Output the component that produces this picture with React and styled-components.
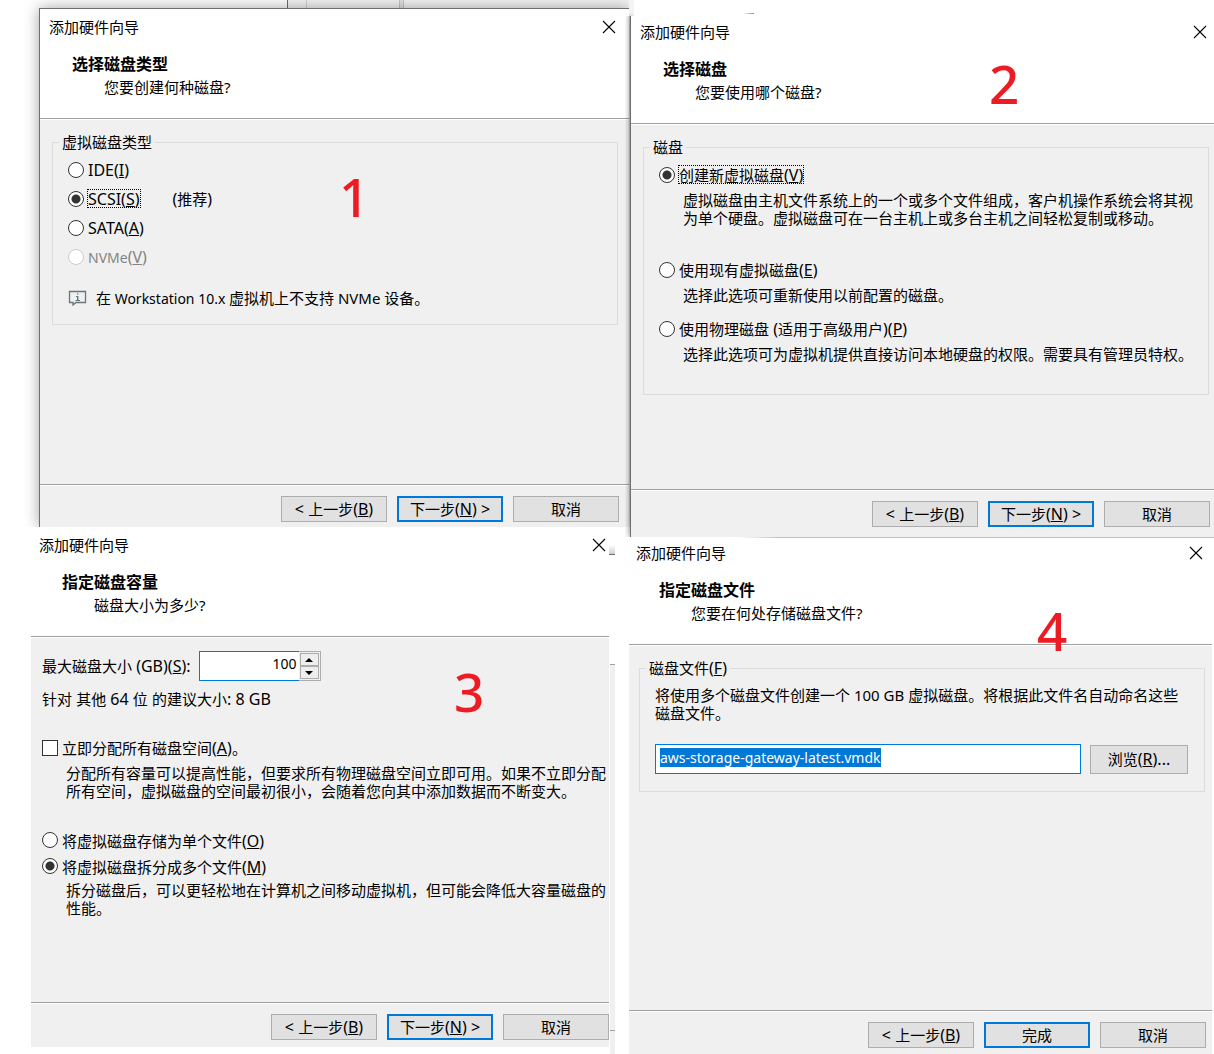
import React from "react";
import styled, { createGlobalStyle, css } from "styled-components";

const GlobalStyle = createGlobalStyle`
  *, *::before, *::after { box-sizing: border-box; }
  body {
    margin: 0;
    background: #fff;
    color: #000;
    font: 15px/18px "Noto Sans CJK SC", "Noto Sans", sans-serif;
  }
  h1, h2, p, fieldset { margin: 0; }
  button, input { font: inherit; color: inherit; }
`;

const latin = css`
  font-family: "Noto Sans", "Noto Sans CJK SC", sans-serif;
  font-size: 14px;
`;

const Latin = styled.span`
  ${latin}
  font-size: ${(p) => p.$size || 14}px;
  line-height: 1;
`;

const Board = styled.main`
  display: grid;
  grid-template-columns: 629fr 585fr;
  min-height: 100vh;
  overflow: hidden;
`;

const Column = styled.div`
  position: relative;
  display: flex;
  flex-direction: column;
  min-width: 0;
`;

const Backdrop = styled.div`
  position: relative;
  display: flex;
  height: ${(p) => p.$height}px;
  flex: none;
`;

const BackdropPane = styled.div`
  width: ${(p) => p.$width}px;
  flex: ${(p) => (p.$grow ? "1 0 auto" : "none")};
  background: ${(p) => p.$tone || "#fff"};
  border-right: ${(p) => (p.$edge ? `1px solid ${p.$edge}` : "0")};
`;

const BackdropMark = styled.div`
  position: absolute;
  left: 114px;
  bottom: 0;
  width: 11px;
  height: 1px;
  background: linear-gradient(to right, #fff, #888);
`;

const Slot = styled.div`
  display: flex;
  flex: none;
  padding: 0 ${(p) => p.$right || 0}px 0 ${(p) => p.$left || 0}px;
`;

const Rule = styled.div`
  flex: none;
  height: 1px;
  background: linear-gradient(to right, #fff 110px, #c0c0c0 150px);
`;

const frames = {
  window: css`
    border: 1px solid #6d6e71;
    border-width: 1px 0 0 1px;
    box-shadow: 0 0 14px rgba(0, 0, 0, 0.36);
    clip-path: inset(-8px -5px 0 -16px);
  `,
  overlap: css`
    box-shadow: -1px 0 #6d6e71, -2px 0 5px rgba(0, 0, 0, 0.4);
    clip-path: inset(2px 0 0 -6px);
  `,
};

const Dialog = styled.section`
  position: relative;
  display: flex;
  flex: 1;
  flex-direction: column;
  min-width: 0;
  background: #f0f0f0;
  ${(p) => frames[p.$frame]}
`;

const DialogHead = styled.header`
  flex: none;
  background: #fff;
  border-bottom: 1px solid #a0a0a0;
  padding-bottom: 21px;
`;

const TitleBar = styled.div`
  display: flex;
  align-items: center;
  justify-content: space-between;
  height: ${(p) => (p.$compact ? 33 : 36)}px;
  padding: 0 ${(p) => p.$right}px ${(p) => (p.$compact ? 3 : 0)}px ${(p) => p.$left}px;
`;

const CloseButton = styled.button`
  display: flex;
  padding: 0;
  border: 0;
  background: none;
`;

const Heading = styled.h1`
  margin: 8px 0 0 ${(p) => p.$left + 23}px;
  font-size: 16px;
  line-height: 20px;
  font-weight: 700;
`;

const Question = styled.p`
  margin: 4px 0 0 ${(p) => p.$left + 55}px;
  line-height: 20px;
`;

const DialogBody = styled.div`
  flex: none;
  min-height: 365px;
  padding: ${(p) => p.$top || 12}px ${(p) => p.$right}px 0 ${(p) => p.$left}px;
  border-top: 1px solid #fff;
`;

const DialogFoot = styled.footer`
  display: flex;
  justify-content: flex-end;
  gap: 10px;
  flex: none;
  padding: 11px ${(p) => p.$right}px ${(p) => p.$bottom}px;
  border-top: 1px solid #a0a0a0;
  box-shadow: inset 0 1px #fff;
`;

const Button = styled.button`
  width: ${(p) => p.$width || 106}px;
  height: ${(p) => p.$height || 26}px;
  flex: none;
  padding: 0;
  background: #e1e1e1;
  border: ${(p) => (p.$primary ? "2px solid #0078d7" : "1px solid #adadad")};
  white-space: nowrap;
`;

const Group = styled.fieldset`
  min-width: 0;
  padding: 0 ${(p) => p.$right || 10}px ${(p) => p.$bottom}px 15px;
  border: 1px solid #dcdcdc;
`;

const Legend = styled.legend`
  margin: 0 0 3px -9px;
  padding: 0 3px;
  line-height: 20px;
`;

const Option = styled.div`
  display: flex;
  align-items: center;
  height: ${(p) => p.$height || 29}px;
  color: ${(p) => (p.$disabled ? "#838383" : "inherit")};
`;

const Choice = styled.input`
  appearance: none;
  flex: none;
  width: 16px;
  height: 16px;
  margin: 0 3px 0 0;
  background: #fff;
  border: 1px solid #333;
  &[type="radio"] { border-radius: 50%; }
  &[type="radio"]:checked {
    background: radial-gradient(circle, #333 0 4px, #fff 5px);
  }
  &:disabled { border-color: #ccc; }
`;

const OptionLabel = styled.label`
  border: 1px dotted ${(p) => (p.$focused ? "#000" : "transparent")};
  line-height: 17px;
  white-space: nowrap;
`;

const Hint = styled.span`
  margin-left: 32px;
`;

const Notice = styled.p`
  display: flex;
  align-items: center;
  gap: 9px;
  height: 20px;
  margin-top: 17px;
`;

const Description = styled.p`
  margin: 0 0 ${(p) => p.$gap || 0}px ${(p) => p.$indent || 0}px;
  padding-top: ${(p) => p.$top || 2}px;
`;

const SizeRow = styled.div`
  display: flex;
  align-items: center;
  gap: 8px;
`;

const Suggestion = styled.p`
  height: 36px;
  margin: 0 0 16px;
  line-height: 36px;
`;

const Spinner = styled.div`
  display: flex;
  width: 122px;
  height: 30px;
`;

const SizeInput = styled.input`
  ${latin}
  flex: 1;
  min-width: 0;
  padding: 0 2px 4px;
  border: 1px solid #0078d7;
  border-right: 0;
  background: #fff;
  text-align: right;
  outline: none;
`;

const Steppers = styled.div`
  display: flex;
  flex-direction: column;
  width: 22px;
  padding: 1px;
  border: 1px solid #adadad;
  border-left: 0;
`;

const Stepper = styled.button`
  display: flex;
  flex: 1;
  align-items: center;
  justify-content: center;
  padding: 0;
  border: 1px solid #adadad;
  background: #eee;
`;

const FileRow = styled.div`
  display: flex;
  align-items: center;
  gap: 9px;
`;

const FileInput = styled.input`
  ${latin}
  flex: 1;
  min-width: 0;
  height: 30px;
  padding: 0 4px 4px;
  border: 1px solid #0078d7;
  background: #fff;
  outline: none;
  &::selection { background: #0078d7; color: #fff; }
`;

const StepMark = styled.span`
  position: absolute;
  left: ${(p) => p.$x}px;
  top: ${(p) => p.$y}px;
  color: #ed1c24;
  font: 500 53px/54px "Noto Sans", sans-serif;
  pointer-events: none;
`;

const EdgeStrip = styled.div`
  position: absolute;
  right: 14px;
  top: 664px;
  bottom: 0;
  width: 5px;
  background: #f0f0f0;
  border-top: 1px solid #a0a0a0;
  &::before {
    content: "";
    position: absolute;
    top: -120px;
    right: 0;
    width: 6px;
    height: 10px;
    background: linear-gradient(#fff, #d0d0d0);
    border-bottom: 1px solid #6d6e71;
  }
  &::after {
    content: "";
    position: absolute;
    inset: auto 0 23px;
    border-top: 1px solid #a0a0a0;
  }
`;

const Key = ({ children, after = "" }) => (
  <Latin $size={16}>
    (<u>{children}</u>){after}
  </Latin>
);

const CloseIcon = () => (
  <svg width="14" height="14" viewBox="0 0 14 14" aria-hidden="true">
    <path d="M1 1l12 12M13 1L1 13" stroke="#000" strokeWidth="1.1" fill="none" />
  </svg>
);

const InfoIcon = () => (
  <svg width="19" height="16" viewBox="0 0 19 16" aria-hidden="true">
    <path d="M1.5 1.5h16v11H8l-3 2.5v-2.5H1.5z" fill="none" stroke="#69757c" strokeWidth="1.3" />
    <path d="M9 3.2h1.4v1.4H9zM8 6h2.4v4H12v1H7.6v-1H9V7H8z" fill="#69757c" />
  </svg>
);

const Arrow = ({ down }) => (
  <svg width="8" height="4" viewBox="0 0 8 4" aria-hidden="true">
    <path d={down ? "M0 0h8L4 4z" : "M0 4h8L4 0z"} fill="#000" />
  </svg>
);

function Wizard({ heading, question, left, closeRight, compact, frame, bodyTop, bodyLeft, bodyRight, footRight, footBottom, last, children }) {
  return (
    <Dialog $frame={frame} aria-label={heading}>
      <DialogHead>
        <TitleBar $left={left} $right={closeRight} $compact={compact}>
          <span>添加硬件向导</span>
          <CloseButton type="button" aria-label="关闭"><CloseIcon /></CloseButton>
        </TitleBar>
        <Heading $left={left}>{heading}</Heading>
        <Question $left={left}>{question}<Latin $size={15}>?</Latin></Question>
      </DialogHead>
      <DialogBody $top={bodyTop} $left={bodyLeft} $right={bodyRight}>{children}</DialogBody>
      <DialogFoot $right={footRight} $bottom={footBottom}>
        <Button type="button"><Latin $size={16}>&lt; </Latin>上一步<Key>B</Key></Button>
        <Button type="button" $primary>
          {last ? "完成" : <>下一步<Key after=" >">N</Key></>}
        </Button>
        <Button type="button">取消</Button>
      </DialogFoot>
    </Dialog>
  );
}

function Radio({ id, name, focused, disabled, checked, height, hint, children }) {
  return (
    <Option $height={height} $disabled={disabled}>
      <Choice type="radio" id={id} name={name} defaultChecked={checked} disabled={disabled} />
      <OptionLabel htmlFor={id} $focused={focused}>{children}</OptionLabel>
      {hint}
    </Option>
  );
}

function DiskType() {
  return (
    <Wizard heading="选择磁盘类型" question="您要创建何种磁盘" frame="window" left={9} closeRight={13} bodyLeft={12} bodyRight={11} footRight={10} footBottom={5}>
      <Group $bottom={16}>
        <Legend>虚拟磁盘类型</Legend>
        <Radio id="ide" name="type"><Latin $size={16}>IDE</Latin><Key>I</Key></Radio>
        <Radio id="scsi" name="type" checked focused hint={<Hint><Latin $size={16}>(</Latin>推荐<Latin $size={16}>)</Latin></Hint>}>
          <Latin $size={16}>SCSI</Latin><Key>S</Key>
        </Radio>
        <Radio id="sata" name="type"><Latin $size={16}>SATA</Latin><Key>A</Key></Radio>
        <Radio id="nvme" name="type" disabled><Latin>NVMe</Latin><Key>V</Key></Radio>
        <Notice>
          <InfoIcon />
          <span>在<Latin> Workstation 10.x </Latin>虚拟机上不支持<Latin $size={15}> NVMe </Latin>设备。</span>
        </Notice>
      </Group>
    </Wizard>
  );
}

function ChooseDisk() {
  return (
    <Wizard heading="选择磁盘" question="您要使用哪个磁盘" frame="overlap" left={9} closeRight={7} bodyLeft={12} bodyRight={5} footRight={4} footBottom={10}>
      <Group $bottom={31}>
        <Legend>磁盘</Legend>
        <Radio id="new" name="disk" checked focused>创建新虚拟磁盘<Key>V</Key></Radio>
        <Description $indent={24} $gap={28}>
          虚拟磁盘由主机文件系统上的一个或多个文件组成，客户机操作系统会将其视为单个硬盘。虚拟磁盘可在一台主机上或多台主机之间轻松复制或移动。
        </Description>
        <Radio id="existing" name="disk">使用现有虚拟磁盘<Key>E</Key></Radio>
        <Description $indent={24} $gap={10}>选择此选项可重新使用以前配置的磁盘。</Description>
        <Radio id="physical" name="disk">使用物理磁盘<Latin $size={16}> (</Latin>适用于高级用户<Latin $size={16}>)</Latin><Key>P</Key></Radio>
        <Description $indent={24}>选择此选项可为虚拟机提供直接访问本地硬盘的权限。需要具有管理员特权。</Description>
      </Group>
    </Wizard>
  );
}

function DiskCapacity() {
  return (
    <Wizard heading="指定磁盘容量" question="磁盘大小为多少" left={8} closeRight={3} bodyTop={13} bodyLeft={11} bodyRight={0} footRight={0} footBottom={7}>
      <SizeRow>
        <label htmlFor="size">最大磁盘大小<Latin $size={16}> (GB)</Latin><Key after=":">S</Key></label>
        <Spinner>
          <SizeInput id="size" type="text" inputMode="numeric" defaultValue="100" />
          <Steppers>
            <Stepper type="button" aria-label="增加"><Arrow /></Stepper>
            <Stepper type="button" aria-label="减少"><Arrow down /></Stepper>
          </Steppers>
        </Spinner>
      </SizeRow>
      <Suggestion>
        针对<Latin $size={16}> </Latin>其他<Latin $size={16}> 64 </Latin>位<Latin $size={16}> </Latin>的建议大小<Latin $size={16}>: 8 GB</Latin>
      </Suggestion>
      <Option>
        <Choice type="checkbox" id="allocate" />
        <OptionLabel htmlFor="allocate">立即分配所有磁盘空间<Key>A</Key>。</OptionLabel>
      </Option>
      <Description $indent={24} $gap={27}>
        分配所有容量可以提高性能，但要求所有物理磁盘空间立即可用。如果不立即分配所有空间，虚拟磁盘的空间最初很小，会随着您向其中添加数据而不断变大。
      </Description>
      <Radio id="single" name="files" height={26}>将虚拟磁盘存储为单个文件<Key>O</Key></Radio>
      <Radio id="split" name="files" height={26} checked>将虚拟磁盘拆分成多个文件<Key>M</Key></Radio>
      <Description $indent={24}>
        拆分磁盘后，可以更轻松地在计算机之间移动虚拟机，但可能会降低大容量磁盘的性能。
      </Description>
    </Wizard>
  );
}

function DiskFile() {
  const input = React.useRef(null);
  React.useEffect(() => {
    input.current.focus({ preventScroll: true });
    input.current.select();
  }, []);
  return (
    <Wizard heading="指定磁盘文件" question="您要在何处存储磁盘文件" last compact left={7} closeRight={9} bodyLeft={10} bodyRight={7} footRight={6} footBottom={6}>
      <Group $right={16} $bottom={17}>
        <Legend><label htmlFor="file">磁盘文件<Key>F</Key></label></Legend>
        <Description $top={5} $gap={22}>
          将使用多个磁盘文件创建一个<Latin $size={15}> 100 GB </Latin>虚拟磁盘。将根据此文件名自动命名这些磁盘文件。
        </Description>
        <FileRow>
          <FileInput id="file" ref={input} defaultValue="aws-storage-gateway-latest.vmdk" />
          <Button type="button" $width={98} $height={29}>浏览<Key after="...">R</Key></Button>
        </FileRow>
      </Group>
    </Wizard>
  );
}

export default function App() {
  return (
    <>
      <GlobalStyle />
      <Board>
        <Column>
          <Backdrop $height={8}>
            <BackdropPane $width={288} $edge="#6d6e71" />
            <BackdropPane $width={19} $tone="#f4f4f4" $edge="#d0d0d0" />
            <BackdropPane $width={93} $tone="#f4f4f4" $edge="#c8c8c8" />
            <BackdropPane $width={4} $tone="#dfe4e2" $edge="#c8c8c8" />
            <BackdropPane $width={200} $tone="#f4f4f4" $grow />
          </Backdrop>
          <Slot $left={39}><DiskType /></Slot>
          <Slot $left={31} $right={20}><DiskCapacity /></Slot>
          <EdgeStrip />
          <StepMark $x={339} $y={170}>1</StepMark>
          <StepMark $x={454} $y={665}>3</StepMark>
        </Column>
        <Column>
          <Backdrop $height={14}>
            <BackdropPane $width={5} $tone="#f4f4f4" />
            <BackdropMark />
          </Backdrop>
          <Slot $left={2}><ChooseDisk /></Slot>
          <Rule />
          <Slot $right={2}><DiskFile /></Slot>
          <StepMark $x={360} $y={57}>2</StepMark>
          <StepMark $x={408} $y={604}>4</StepMark>
        </Column>
      </Board>
    </>
  );
}
